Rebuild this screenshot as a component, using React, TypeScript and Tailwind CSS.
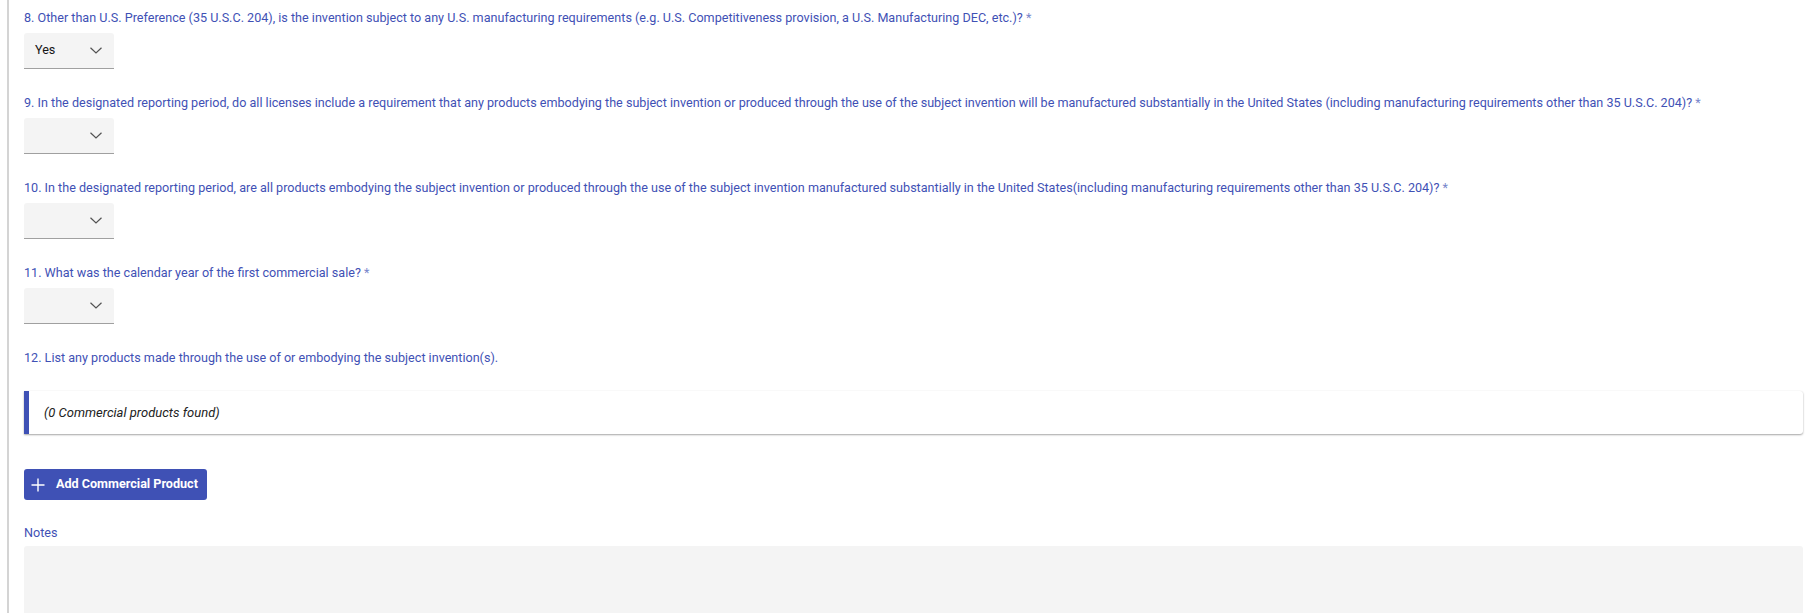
import React from "react";

const questions = [
  {
    id: 8,
    text: "8. Other than U.S. Preference (35 U.S.C. 204), is the invention subject to any U.S. manufacturing requirements (e.g. U.S. Competitiveness provision, a U.S. Manufacturing DEC, etc.)?",
    value: "Yes",
  },
  {
    id: 9,
    text: "9. In the designated reporting period, do all licenses include a requirement that any products embodying the subject invention or produced through the use of the subject invention will be manufactured substantially in the United States (including manufacturing requirements other than 35 U.S.C. 204)?",
    value: "",
  },
  {
    id: 10,
    text: "10. In the designated reporting period, are all products embodying the subject invention or produced through the use of the subject invention manufactured substantially in the United States(including manufacturing requirements other than 35 U.S.C. 204)?",
    value: "",
  },
  {
    id: 11,
    text: "11. What was the calendar year of the first commercial sale?",
    value: "",
  },
];

function Chevron() {
  return (
    <svg width="12" height="7" viewBox="0 0 12 7" fill="none" className="shrink-0">
      <path d="M0.5 0.8 L6 6 L11.5 0.8" stroke="#525252" strokeWidth="1.2" />
    </svg>
  );
}

function Select({ value }: { value: string }) {
  return (
    <div className="mt-[7px] flex h-[36px] w-[90px] items-center justify-between rounded-t-[3px] border-b border-[#a0a0a0] bg-[#f4f4f4] pl-[11px] pr-[12px] text-[12.6px] text-[#161616]">
      <span>{value}</span>
      <Chevron />
    </div>
  );
}

export default function App() {
  return (
    <div
      className="h-[613px] overflow-hidden bg-white pl-[7px]"
      style={{ fontFamily: "Roboto, 'Liberation Sans', sans-serif" }}
    >
      <div className="h-full border-l-2 border-[#d4d4d4] pl-[15px] pr-[15px] pt-[10px]">
        {questions.map((q) => (
          <div key={q.id} className="mb-[26px]">
            <div className="text-[12.6px] leading-4 text-[#3f51b5]">
              {q.text} <span className="text-[#7986cb]">*</span>
            </div>
            <Select value={q.value} />
          </div>
        ))}

        <div className="text-[12.6px] leading-4 text-[#3f51b5]">
          12. List any products made through the use of or embodying the subject invention(s).
        </div>

        <div className="mt-[25px] flex h-[43px] items-center rounded-r-[3px] border-l-[5px] border-[#3f51b5] bg-white pl-[15px] shadow-[0_1px_2px_rgba(0,0,0,0.35),0_0_1px_rgba(0,0,0,0.08)]">
          <span className="text-[13px] italic text-[#222]">(0 Commercial products found)</span>
        </div>

        <button className="mt-[35px] flex h-[31px] w-[183px] items-center rounded-[3px] bg-[#3f51b5] pl-[7px] text-white">
          <svg width="14" height="14" viewBox="0 0 14 14" fill="none">
            <path d="M7 0.5 V13.5 M0.5 7 H13.5" stroke="white" strokeWidth="1.4" />
          </svg>
          <span className="ml-[11px] text-[12.6px] font-bold">Add Commercial Product</span>
        </button>

        <div className="mt-[25px] text-[12.6px] leading-4 text-[#3f51b5]">Notes</div>
        <div className="mt-[5px] h-[120px] rounded-t-[3px] bg-[#f4f4f4]" />
      </div>
    </div>
  );
}
